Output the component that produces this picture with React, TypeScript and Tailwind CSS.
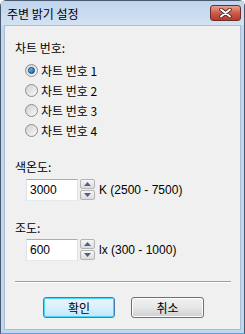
import React from "react";

const font = { fontFamily: '"Noto Sans CJK KR", "Liberation Sans", sans-serif' };

function Radio({ checked, label }: { checked?: boolean; label: string }) {
  return (
    <div className="flex h-[20px] items-center">
      <div className="ml-[10px] flex h-[13px] w-[13px] items-center justify-center rounded-full border border-[#8f8f8f] bg-gradient-to-br from-[#d0d0d0] to-[#fafafa]">
        {checked && (
          <div className="h-[7px] w-[7px] rounded-full border border-[#0f3b6b] bg-gradient-to-br from-[#6fd3ff] to-[#0a5fa8]" />
        )}
      </div>
      <span className="ml-[3px] text-[12px] leading-[15px] text-black">{label}</span>
    </div>
  );
}

function Spin({ value, unit }: { value: string; unit: string }) {
  return (
    <div className="ml-[11px] flex h-[22px] items-center">
      <div className="flex h-[22px] w-[52px] items-center border border-[#abadb3] border-b-[#e3e9ef] border-l-[#e2e3ea] border-r-[#dbdfe6] bg-white pl-[3px] text-[12px] text-black" style={{ fontFamily: '"Liberation Sans", sans-serif' }}>
        {value}
      </div>
      <div className="ml-[2px] flex h-[22px] w-[15px] flex-col gap-[1px]">
        <div className="flex h-[10px] items-center justify-center rounded-[2px] border border-[#b4b4b4] bg-gradient-to-b from-[#f5f5f5] to-[#dcdcdc]">
          <svg width="7" height="4" viewBox="0 0 7 4"><path d="M3.5 0 L7 4 L0 4 Z" fill="#4d6185" /></svg>
        </div>
        <div className="flex h-[10px] items-center justify-center rounded-[2px] border border-[#b4b4b4] bg-gradient-to-b from-[#f5f5f5] to-[#dcdcdc]">
          <svg width="7" height="4" viewBox="0 0 7 4"><path d="M0 0 L7 0 L3.5 4 Z" fill="#4d6185" /></svg>
        </div>
      </div>
      <span className="ml-[4px] text-[12px] text-black" style={{ fontFamily: '"Liberation Sans", "Noto Sans CJK KR", sans-serif' }}>{unit}</span>
    </div>
  );
}

export default function App() {
  return (
    <div className="h-[334px] w-[245px] bg-white" style={font}>
      <div className="flex h-[334px] w-[245px] flex-col rounded-t-[6px] border border-[#4a5a6e] border-b-[#2fb8df] bg-[#c2d6ee]">
        <div className="flex h-[24px] items-center bg-gradient-to-b from-[#bfd4ee] to-[#d4e2f2] pl-[6px] pr-[3px]">
          <span className="text-[12px] leading-[15px] text-black">주변 밝기 설정</span>
          <div className="ml-auto flex h-[16px] w-[31px] items-center justify-center rounded-[3px] border border-[#6e2e2a] bg-gradient-to-b from-[#e8a090] via-[#cf5a48] to-[#b83a2a]">
            <svg width="13" height="10" viewBox="0 0 13 10">
              <path d="M2 1.5 L11 8.5 M11 1.5 L2 8.5" stroke="#4a2a2a" strokeWidth="3.6" strokeLinecap="round" />
              <path d="M2 1.5 L11 8.5 M11 1.5 L2 8.5" stroke="#ffffff" strokeWidth="2" strokeLinecap="round" />
            </svg>
          </div>
        </div>
        <div className="mx-[3px] mb-[3px] flex flex-1 flex-col border border-[#a9bed6] bg-[#f0f0f0] pl-[10px] pt-[14px]">
          <div className="flex h-[16px] items-center text-[12px] text-black">차트 번호:</div>
          <div className="mt-[4px] flex flex-col">
            <Radio checked label="차트 번호 1" />
            <Radio label="차트 번호 2" />
            <Radio label="차트 번호 3" />
            <Radio label="차트 번호 4" />
          </div>
          <div className="mt-[19px] flex h-[16px] items-center text-[12px] text-black">색온도:</div>
          <div className="mt-[4px]">
            <Spin value="3000" unit="K (2500 - 7500)" />
          </div>
          <div className="mt-[19px] flex h-[16px] items-center text-[12px] text-black">조도:</div>
          <div className="mt-[3px]">
            <Spin value="600" unit="lx (300 - 1000)" />
          </div>
          <div className="mr-[9px] mt-[20px] h-[2px] border-t border-b border-t-[#a0a0a0] border-b-white" />
          <div className="mt-[14px] flex">
            <button className="ml-[28px] flex h-[21px] w-[72px] items-center justify-center rounded-[3px] border border-[#3c7fb1] bg-gradient-to-b from-[#eaf6fd] via-[#d9f0fc] to-[#bee6fd] text-[12px] text-black shadow-[inset_0_0_0_1px_#48d8fb]">
              확인
            </button>
            <button className="ml-[16px] flex h-[21px] w-[73px] items-center justify-center rounded-[3px] border border-[#707070] bg-gradient-to-b from-[#f2f2f2] via-[#e6e6e6] to-[#d0d0d0] text-[12px] text-black shadow-[inset_0_0_0_1px_#fcfcfc]">
              취소
            </button>
          </div>
        </div>
      </div>
    </div>
  );
}
